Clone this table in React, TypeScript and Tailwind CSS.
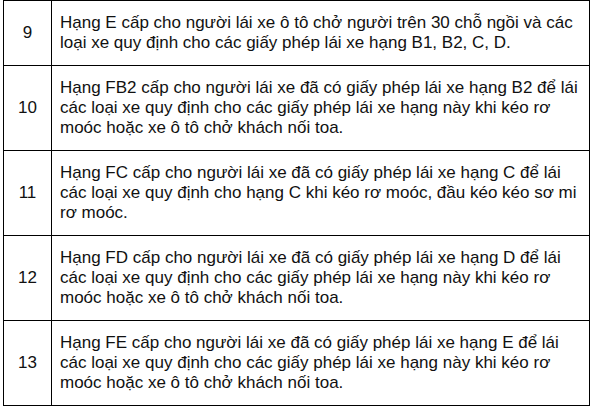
import React from 'react';

const rows: { no: string; text: string }[] = [
  {
    no: '9',
    text: 'Hạng E cấp cho người lái xe ô tô chở người trên 30 chỗ ngồi và các loại xe quy định cho các giấy phép lái xe hạng B1, B2, C, D.',
  },
  {
    no: '10',
    text: 'Hạng FB2 cấp cho người lái xe đã có giấy phép lái xe hạng B2 để lái các loại xe quy định cho các giấy phép lái xe hạng này khi kéo rơ moóc hoặc xe ô tô chở khách nối toa.',
  },
  {
    no: '11',
    text: 'Hạng FC cấp cho người lái xe đã có giấy phép lái xe hạng C để lái các loại xe quy định cho hạng C khi kéo rơ moóc, đầu kéo kéo sơ mi rơ moóc.',
  },
  {
    no: '12',
    text: 'Hạng FD cấp cho người lái xe đã có giấy phép lái xe hạng D để lái các loại xe quy định cho các giấy phép lái xe hạng này khi kéo rơ moóc hoặc xe ô tô chở khách nối toa.',
  },
  {
    no: '13',
    text: 'Hạng FE cấp cho người lái xe đã có giấy phép lái xe hạng E để lái các loại xe quy định cho các giấy phép lái xe hạng này khi kéo rơ moóc hoặc xe ô tô chở khách nối toa.',
  },
];

const App: React.FC = () => {
  return (
    <div className="w-[595px] h-[411px] bg-white pl-[3px] font-['Liberation_Sans',Arial,sans-serif] text-[17px] leading-[20px] tracking-[0px] text-[#111]">
      <table className="w-[587px] border-collapse">
        <tbody>
          {rows.map((r) => (
            <tr key={r.no}>
              <td className="w-[48px] border-[1.5px] border-black text-center align-middle">{r.no}</td>
              <td className="border-[1.5px] border-black pl-[8px] pr-[1px] py-[12px] align-middle">{r.text}</td>
            </tr>
          ))}
        </tbody>
      </table>
    </div>
  );
};

export default App;
